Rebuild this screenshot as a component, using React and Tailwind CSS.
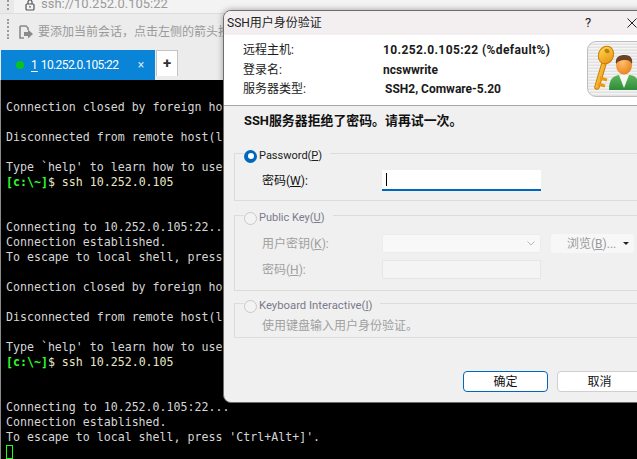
const mono = { fontFamily: '"DejaVu Sans Mono", monospace' };

function Cn({ children }) {
  return <span className="underline underline-offset-1">{children}</span>;
}

function Radio({ on }) {
  return on ? (
    <span className="w-[13px] h-[13px] rounded-full bg-[#0067c0] flex items-center justify-center shrink-0">
      <span className="w-[6px] h-[6px] rounded-full bg-white" />
    </span>
  ) : (
    <span className="w-[13px] h-[13px] rounded-full border border-[#c8c8c8] bg-[#f3f3f3] shrink-0" />
  );
}

function Group({ label, on, className, children }) {
  return (
    <div className={"border border-[#dcdcdc] border-r-0 pl-[8px] " + className}>
      <div className="flex items-center h-[14px] -mt-[5px] ml-[1px]">
        <span className="flex items-center gap-[2px] bg-[#f0f0f0] pr-[8px] leading-[14px]">
          <Radio on={on} />
          <span className={on ? "text-[#202020] text-[11px]" : "text-[#7a7a8c] text-[11px]"}>{label}</span>
        </span>
      </div>
      {children}
    </div>
  );
}

function KeyIcon() {
  return (
    <div className="w-[60px] h-[56px] shrink-0 rounded-[9px] border border-[#bdbdbd] bg-[repeating-linear-gradient(180deg,#f4f4f4_0px,#f4f4f4_1px,#e2e2e2_2px,#e2e2e2_3px)] overflow-hidden">
      <svg width="60" height="56" viewBox="0 0 60 56">
        <defs>
          <linearGradient id="k" x1="0" y1="0" x2="1" y2="1">
            <stop offset="0" stopColor="#ffe05a" />
            <stop offset="1" stopColor="#e88a08" />
          </linearGradient>
          <linearGradient id="b" x1="0" y1="0" x2="0" y2="1">
            <stop offset="0" stopColor="#5cb85c" />
            <stop offset="1" stopColor="#2e8b3a" />
          </linearGradient>
          <radialGradient id="f" cx="0.4" cy="0.35" r="0.7">
            <stop offset="0" stopColor="#ffc070" />
            <stop offset="1" stopColor="#e8811a" />
          </radialGradient>
        </defs>
        <path d="M17 18 L9 45" stroke="#c97a08" strokeWidth="5.5" strokeLinecap="round" />
        <path d="M17 18 L9 45" stroke="url(#k)" strokeWidth="3.6" strokeLinecap="round" />
        <path d="M12 36 L19 38 M10 42 L17 44" stroke="#eb9a10" strokeWidth="3" />
        <ellipse cx="18" cy="13" rx="7.5" ry="9" fill="url(#k)" stroke="#c97a08" transform="rotate(20 18 13)" />
        <ellipse cx="19" cy="9" rx="2.6" ry="2" fill="#b9820e" transform="rotate(20 19 9)" />
        <path d="M21 48 C21 37 25 34 31 33 L42 33 C49 34 51 38 51 48 Z" fill="url(#b)" />
        <path d="M31 33 L36 46 L41 33 Z" fill="#f6f6f2" />
        <ellipse cx="36" cy="23" rx="8" ry="9.5" fill="url(#f)" />
        <path d="M28 22 C27 15 31 13 37 13 C43 13 45 17 44 22 C42 18 39 18 36 18 C33 18 30 19 28 22 Z" fill="#6a4326" />
      </svg>
    </div>
  );
}

const lines = [
  "Connection closed by foreign host.",
  "",
  "Disconnected from remote host(lsw) at 10:15:22.",
  "",
  "Type `help' to learn how to use Xshell prompt.",
  "P",
  "",
  "",
  "Connecting to 10.252.0.105:22...",
  "Connection established.",
  "To escape to local shell, press 'Ctrl+Alt+]'.",
  "",
  "Connection closed by foreign host.",
  "",
  "Disconnected from remote host(lsw) at 10:16:08.",
  "",
  "Type `help' to learn how to use Xshell prompt.",
  "P",
  "",
  "",
  "Connecting to 10.252.0.105:22...",
  "Connection established.",
  "To escape to local shell, press 'Ctrl+Alt+]'.",
];

export default function App() {
  return (
    <div
      className="relative w-[637px] h-[459px] overflow-hidden bg-[#e9e9e9] text-[12px] flex flex-col"
      style={{ fontFamily: 'Roboto, "Noto Sans CJK SC", sans-serif' }}
    >
      {/* address bar */}
      <div className="h-[14px] flex shrink-0 border-b border-[#dedede] overflow-hidden">
        <div className="w-[14px] shrink-0 flex justify-center pl-[2px]">
          <div className="w-[2px] h-[10px] border-l-2 border-dotted border-[#9a9a9a]" />
        </div>
        <div className="flex-1 bg-[#f3f3f3] flex items-center pl-[11px] gap-[6px] -mt-[6px]">
          <svg width="10" height="12" viewBox="0 0 10 12" fill="none" stroke="#555" strokeWidth="1.2" className="mt-[3px]">
            <rect x="1" y="5" width="8" height="6" rx="1" />
            <path d="M3 5V3a2 2 0 0 1 4 0v2" />
            <rect x="4.3" y="7" width="1.4" height="1.6" fill="#555" stroke="none" />
          </svg>
          <span className="text-[#9a9a9a] text-[13px]">ssh://10.252.0.105:22</span>
        </div>
      </div>
      {/* hint bar */}
      <div className="h-[29px] shrink-0 flex items-center pl-[7px] pt-[6px] bg-[#ececec]">
        <div className="w-[2px] h-[20px] -mt-[6px] border-l-2 border-dotted border-[#9a9a9a] mr-[10px]" />
        <svg width="15" height="14" viewBox="0 0 15 14" fill="none" className="mr-[4px]">
          <path d="M1 1h6l2 2v2M1 1v12h4" stroke="#8a8a8a" strokeWidth="1.6" />
          <path d="M5 7h4V4.5L14 9l-5 4.5V11H5z" fill="#8a8a8a" />
        </svg>
        <span className="text-[#9a9a9a] whitespace-nowrap">要添加当前会话，点击左侧的箭头按钮。</span>
      </div>
      {/* tab bar */}
      <div className="h-[37px] shrink-0 flex items-end pl-[1px] bg-[#ececec]">
        <div className="w-[154px] h-[30px] bg-[#0a84d6] flex items-center pl-[15px] text-white">
          <span className="w-[8px] h-[8px] rounded-full bg-[#08c41c] mr-[7px]" />
          <span className="underline underline-offset-2">1</span>
          <span className="ml-[3px] w-[97px] whitespace-nowrap tracking-[-0.6px]">10.252.0.105:22</span>
          <span className="text-[#cfe6f7] text-[12px]">×</span>
        </div>
        <div className="w-[22px] h-[26px] ml-[1px] mb-[4px] bg-white border border-[#c4c4c4] border-b-0 flex items-center justify-center text-[#333] font-bold text-[15px]">
          +
        </div>
      </div>
      {/* terminal */}
      <div className="flex-1 bg-black border-l border-[#8a8a8a] pl-[5px] pt-[20px] text-[11.6px] leading-[15px] text-[#d6d6d6] whitespace-pre overflow-hidden" style={mono}>
        {lines.map((l, i) =>
          l === "P" ? (
            <div key={i} className="h-[15px]">
              <span className="text-[#2cff2c] font-bold">[c:\~]</span>
              <span className="text-[#e8e8c8]">$ ssh 10.252.0.105</span>
            </div>
          ) : (
            <div key={i} className="h-[15px]">{l}</div>
          )
        )}
        <div className="w-[7px] h-[14px] border border-[#18ff18]" />
      </div>

      {/* dialog window */}
      <div className="absolute left-[223px] top-[10px] w-[440px] h-[393px] bg-[#f0f0f0] rounded-[8px] border border-[#6e6e6e] flex flex-col shadow-[0_0_6px_rgba(0,0,0,0.35)] text-[#1a1a1a] overflow-hidden">
        <div className="h-[24px] shrink-0 bg-[#f3eff0] flex items-center pl-[3px] text-[12px] text-[#222]">
          <span className="w-[358px]">SSH用户身份验证</span>
          <span className="text-[13px] w-[12px]">?</span>
          <svg width="10" height="10" viewBox="0 0 10 10" stroke="#222" className="ml-[30px]">
            <path d="M0.5 0.5 9.5 9.5 M9.5 0.5 0.5 9.5" />
          </svg>
        </div>
        <div className="h-[71px] shrink-0 bg-white border-b border-[#a8a8a8] flex pl-[19px] pt-[6px]">
          <div className="w-[140px] shrink-0 leading-[19.5px]">
            <div>远程主机:</div>
            <div>登录名:</div>
            <div>服务器类型:</div>
          </div>
          <div className="w-[204px] shrink-0 font-bold leading-[19.5px] text-[12px] whitespace-nowrap">
            <div className="tracking-[0.4px]">10.252.0.105:22 (%default%)</div>
            <div>ncswwrite</div>
            <div className="pl-[2px]">SSH2, Comware-5.20</div>
          </div>
          <KeyIcon />
        </div>
        <div className="flex-1 flex flex-col">
          <div className="h-[30px] shrink-0 flex items-center pl-[20px] font-bold text-[12.9px] text-[#111]">
            SSH服务器拒绝了密码。请再试一次。
          </div>
          <Group label={<>Password(<Cn>P</Cn>)</>} on className="ml-[10px] mt-[17px] h-[48px]">
            <div className="flex items-center mt-[7px] ml-[19px] text-[#111] h-[21px]">
              <span className="w-[120px]">密码(<Cn>W</Cn>):</span>
              <div className="w-[159px] h-[21px] bg-white border-b-2 border-[#0067c0] pl-[3px] pt-[3px]">
                <div className="w-[1px] h-[13px] bg-black ml-[1px]" />
              </div>
            </div>
          </Group>
          <Group label={<>Public Key(<Cn>U</Cn>)</>} className="ml-[10px] mt-[14px] h-[76px] text-[#a0a0a0]">
            <div className="flex items-center mt-[9px] ml-[19px] h-[19px]">
              <span className="w-[120px]">用户密钥(<Cn>K</Cn>):</span>
              <div className="w-[159px] h-[19px] bg-[#f8f8f8] rounded-[2px] border border-[#ececec] flex items-center justify-end pr-[5px]">
                <svg width="8" height="5" viewBox="0 0 8 5" fill="none" stroke="#b8b8b8"><path d="M0.5 0.5 4 4 7.5 0.5" /></svg>
              </div>
              <div className="w-[83px] h-[19px] ml-[10px] bg-[#f7f7f7] rounded-[3px] flex items-center pl-[16px] text-[#9a9a9a]">
                <span className="whitespace-nowrap">浏览(<Cn>B</Cn>)...</span>
                <svg width="6" height="3" viewBox="0 0 6 3" fill="#222" className="ml-[7px]"><path d="M0 0H6L3 3Z" /></svg>
              </div>
            </div>
            <div className="flex items-center mt-[7px] ml-[19px] h-[19px]">
              <span className="w-[120px]">密码(<Cn>H</Cn>):</span>
              <div className="w-[159px] h-[19px] bg-[#f4f4f4] border border-[#e6e6e6]" />
            </div>
          </Group>
          <Group label={<span className="text-[11.3px]">Keyboard Interactive(<Cn>I</Cn>)</span>} className="ml-[10px] mt-[12px] h-[35px] text-[#a0a0a0]">
            <div className="ml-[19px] mt-[5px] leading-[16px]">使用键盘输入用户身份验证。</div>
          </Group>
          <div className="flex ml-[239px] mt-[33px] gap-[9px] text-[#111]">
            <button className="w-[85px] h-[21px] rounded-[4px] bg-white border border-[#0067c0] flex items-center justify-center">确定</button>
            <button className="w-[85px] h-[21px] rounded-[4px] bg-white border border-[#cfcfcf] flex items-center justify-center">取消</button>
          </div>
        </div>
      </div>
    </div>
  );
}
